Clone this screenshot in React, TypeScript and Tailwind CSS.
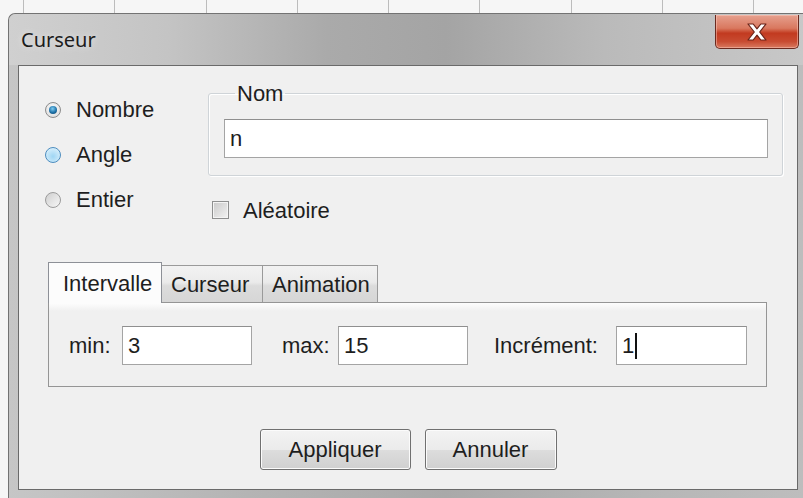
const LABEL = 'text-[22px] leading-[25px] text-[#1e1e1e] whitespace-nowrap';
const FIELD = 'h-[39px] border border-[#a4a4a4] border-t-[#8f8f8f] bg-white flex items-center pl-[5px]';

function Radio({ state }: { state: 'on' | 'hover' | 'off' }) {
  if (state === 'on') {
    return (
      <div className="w-[16px] h-[16px] rounded-full border border-[#8c8c8c] bg-[radial-gradient(circle_at_50%_40%,#ffffff,#d6d6d6)] flex items-center justify-center shrink-0">
        <div className="w-[8px] h-[8px] rounded-full bg-[radial-gradient(circle_at_45%_35%,#7fcdf2,#1f72a8_55%,#0c3d63)]" />
      </div>
    );
  }
  if (state === 'hover') {
    return (
      <div className="w-[16px] h-[16px] rounded-full border border-[#4d8dbf] bg-[radial-gradient(circle_at_50%_60%,#9fd6f4,#e6f5fd)] shrink-0" />
    );
  }
  return (
    <div className="w-[16px] h-[16px] rounded-full border border-[#9b9b9b] bg-[linear-gradient(135deg,#cfcfcf,#f7f7f7)] shrink-0" />
  );
}

function RadioRow({ state, label }: { state: 'on' | 'hover' | 'off'; label: string }) {
  return (
    <div className="h-[45px] flex items-center gap-[15px]">
      <Radio state={state} />
      <span className={LABEL}>{label}</span>
    </div>
  );
}

function Tab({ label, active, w }: { label: string; active?: boolean; w: string }) {
  if (active) {
    return (
      <div className={`${w} relative z-10 h-[41px] border border-b-0 border-[#8d9097] bg-[#fcfcfc] flex items-center pl-[14px]`}>
        <span className={LABEL}>{label}</span>
      </div>
    );
  }
  return (
    <div className={`${w} mt-[3px] h-[37px] border border-b-0 border-l-0 border-[#9a9a9a] bg-[linear-gradient(#f2f2f2,#ebebeb_45%,#dcdcdc_55%,#d6d6d6)] flex items-center pl-[9px]`}>
      <span className={LABEL}>{label}</span>
    </div>
  );
}

function Button({ label, w }: { label: string; w: string }) {
  return (
    <div className={`${w} h-[41px] rounded-[3px] border border-[#707070] bg-[linear-gradient(#f3f3f3,#ebebeb_50%,#dddddd_50%,#d0d0d0)] shadow-[inset_0_0_0_1px_#fbfbfb] flex items-center justify-center`}>
      <span className={LABEL}>{label}</span>
    </div>
  );
}

export default function App() {
  return (
    <div className="w-[803px] h-[498px] overflow-hidden bg-[#f6f6f6] font-['Liberation_Sans',Arial,sans-serif]">
      {/* column header strip behind the dialog */}
      <div className="flex h-[13px] pl-[23px]">
        {Array.from({ length: 9 }).map((_, i) => (
          <div key={i} className="w-[91.3px] shrink-0 border-l border-[#bcbcbc]" />
        ))}
      </div>

      {/* dialog window */}
      <div className="ml-[8px] w-[795px] h-[485px] flex flex-col rounded-tl-[7px] border-t border-l border-[#737373] bg-[linear-gradient(90deg,#c6c6c6,#b4b4b4_30%,#a9a9a9_55%,#b6b6b6_80%,#bdbdbd)]">
        {/* title bar */}
        <div className="h-[51px] flex items-start rounded-tl-[7px] bg-[linear-gradient(90deg,#d0d0d0,#c4c4c4_20%,#aaaaaa_40%,#a4a4a4_55%,#bababa_75%,#c8c8c8)]">
          <span className="mt-[12px] pl-[12px] text-[20px] leading-[28px] text-[#1b1b1b] font-['Noto_Sans',sans-serif] [text-shadow:0_0_6px_#e8e8e8]">
            Curseur
          </span>
          <div className="ml-auto mr-[4px] mt-[1px] w-[84px] h-[34px] rounded-b-[5px] border border-t-0 border-[#6b2a1f] bg-[linear-gradient(#e6a08e,#d9785f_40%,#c23a20_55%,#c84b31_80%,#d97a60)] shadow-[inset_0_0_0_1px_rgba(255,210,200,0.45)] flex items-center justify-center">
            <svg width="22" height="18" viewBox="0 0 22 18">
              <path
                d="M2 1h5.2l3.8 4.9 3.8-4.9H20l-6.3 8 6.3 8h-5.2L11 12.1 7.2 17H2l6.3-8z"
                fill="#ffffff"
                stroke="#6a2318"
                strokeWidth="1.2"
                strokeLinejoin="round"
              />
            </svg>
          </div>
        </div>

        {/* dialog body */}
        <div className="ml-[9px] w-[780px] h-[425px] border border-[#6a6a6a] bg-[#f0f0f0] flex flex-col pt-[15px]">
          <div className="flex items-start">
            <div className="w-[189px] pl-[26px] mt-[6px] flex flex-col">
              <RadioRow state="on" label="Nombre" />
              <RadioRow state="hover" label="Angle" />
              <RadioRow state="off" label="Entier" />
            </div>

            <div className="w-[575px] flex flex-col">
              <fieldset className="w-[575px] border border-[#cfd4d8] rounded-[3px] pl-[15px] pr-[14px] pb-[17px] shadow-[inset_1px_1px_0_#ffffff,1px_1px_0_#ffffff]">
                <legend className={`ml-[11px] px-[2px] ${LABEL}`}>Nom</legend>
                <div className={`mt-[13px] w-[544px] ${FIELD}`}>
                  <span className={LABEL}>n</span>
                </div>
              </fieldset>

              <div className="mt-[22px] h-[24px] pl-[4px] flex items-center gap-[14px]">
                <div className="w-[17px] h-[18px] border border-[#8e8f8f] bg-[linear-gradient(135deg,#c9c9c9,#f3f3f3)] shadow-[inset_0_0_0_1px_#f4f4f4]" />
                <span className={LABEL}>Aléatoire</span>
              </div>
            </div>
          </div>

          {/* tabbed pane */}
          <div className="mt-[40px] ml-[29px] w-[719px] flex flex-col">
            <div className="flex items-start">
              <Tab label="Intervalle" active w="w-[114px]" />
              <Tab label="Curseur" w="w-[101px]" />
              <Tab label="Animation" w="w-[115px]" />
            </div>
            <div className="-mt-[1px] h-[85px] border border-[#959595] bg-[linear-gradient(#fdfdfd,#f0f0f0_8px)] pt-[23px] pl-[20px] flex items-start">
              <span className={`w-[53px] h-[39px] flex items-center ${LABEL}`}>min:</span>
              <div className={`w-[130px] ${FIELD}`}>
                <span className={LABEL}>3</span>
              </div>
              <span className={`ml-[30px] w-[56px] h-[39px] flex items-center ${LABEL}`}>max:</span>
              <div className={`w-[130px] ${FIELD}`}>
                <span className={LABEL}>15</span>
              </div>
              <span className={`ml-[26px] w-[122px] h-[39px] flex items-center ${LABEL}`}>Incrément:</span>
              <div className={`w-[131px] ${FIELD}`}>
                <span className={LABEL}>1</span>
                <span className="ml-[1px] w-[2px] h-[26px] bg-[#111111]" />
              </div>
            </div>
          </div>

          <div className="mt-[42px] flex justify-center gap-[14px]">
            <Button label="Appliquer" w="w-[151px]" />
            <Button label="Annuler" w="w-[132px]" />
          </div>
        </div>
      </div>
    </div>
  );
}
